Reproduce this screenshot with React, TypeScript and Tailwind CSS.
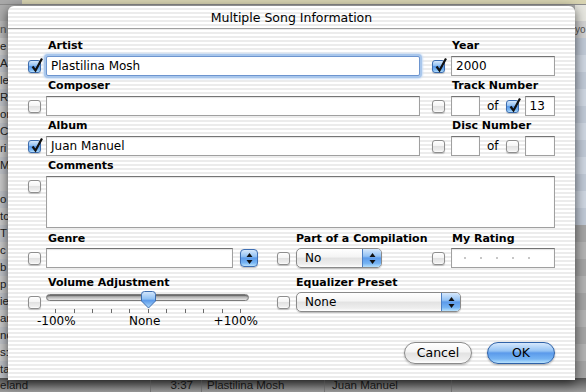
import React from "react";

const stripe =
  "bg-[repeating-linear-gradient(180deg,#ffffff_0px,#ffffff_2px,#ececec_2px,#ececec_4px)]";
const aquaBlue =
  "bg-[linear-gradient(180deg,#d6e8fc_0%,#93c2f4_40%,#5b9aea_50%,#76b4f3_80%,#b9e2fd_100%)]";
const aquaWhite =
  "bg-[linear-gradient(180deg,#ffffff_0%,#f4f4f4_45%,#e2e2e2_50%,#eeeeee_85%,#ffffff_100%)]";

function Check({ on = false }: { on?: boolean }) {
  return (
    <span
      className={`relative block h-[13px] w-[13px] shrink-0 rounded-[3px] border shadow-[0_1px_1px_rgba(0,0,0,0.2)] ${
        on ? `border-[#3c6cae] ${aquaBlue}` : `border-[#8e8e8e] ${aquaWhite}`
      }`}
    >
      {on && (
        <svg className="absolute -top-[4px] left-[1px]" width="14" height="16" viewBox="0 0 14 16">
          <path d="M2.5 9.5 L5.5 13.5 L12 1.5" fill="none" stroke="#111" strokeWidth="2.2" />
        </svg>
      )}
    </span>
  );
}

function Field({ className, focus, children }: { className: string; focus?: boolean; children?: React.ReactNode }) {
  const look = focus
    ? "rounded-[2px] border-[#6d95cf] shadow-[0_0_0_2px_#a9c7ec,0_0_2px_3px_#cbdef5]"
    : "border-[#a0a0a0] border-t-[#747474] shadow-[inset_0_1px_1px_rgba(0,0,0,0.12)]";
  return (
    <div className={`shrink-0 border bg-white pl-[4px] text-[12px] leading-[18px] text-black ${look} ${className}`}>
      {children}
    </div>
  );
}

function Label({ children, pad = "pl-[20px]" }: { children: React.ReactNode; pad?: string }) {
  return <div className={`h-[14px] whitespace-nowrap text-[11px] font-bold leading-[14px] text-black ${pad}`}>{children}</div>;
}

function Arrows() {
  return (
    <svg width="7" height="11" viewBox="0 0 7 11">
      <path d="M3.5 0 L6.5 4 H0.5 Z M0.5 7 H6.5 L3.5 11 Z" fill="#111" />
    </svg>
  );
}

function Popup({ className, value }: { className: string; value: string }) {
  return (
    <div
      className={`flex h-[20px] shrink-0 items-center rounded-[5px] border border-[#8a8a8a] shadow-[0_1px_1px_rgba(0,0,0,0.2)] ${aquaWhite} ${className}`}
    >
      <span className="flex-1 pl-[8px] text-[12px] leading-[18px] text-black">{value}</span>
      <span className={`flex h-full w-[19px] items-center justify-center rounded-r-[4px] border-l border-[#4d7fc2] ${aquaBlue}`}>
        <Arrows />
      </span>
    </div>
  );
}

function Slider() {
  return (
    <div className="relative w-[203px]">
      <div className="mt-[2px] h-[7px] rounded-full border border-[#7a7a7a] bg-[linear-gradient(180deg,#8c8c8c,#bdbdbd_50%,#e8e8e8)] shadow-[inset_0_1px_1px_rgba(0,0,0,0.3)]" />
      <svg className="absolute -top-[1px] left-[94px]" width="17" height="18" viewBox="0 0 17 18">
        <defs>
          <linearGradient id="thumb" x1="0" y1="0" x2="0" y2="1">
            <stop offset="0" stopColor="#d6e8fc" />
            <stop offset="0.45" stopColor="#8fc0f3" />
            <stop offset="0.55" stopColor="#5b9aea" />
            <stop offset="1" stopColor="#b2dcfc" />
          </linearGradient>
        </defs>
        <path d="M1.5 3.5 Q1.5 0.5 4.5 0.5 H12.5 Q15.5 0.5 15.5 3.5 V10 L8.5 17 L1.5 10 Z" fill="url(#thumb)" stroke="#3d6db0" />
      </svg>
      <div className="ml-[9px] mt-[8px] flex w-[186px] justify-between">
        {Array.from({ length: 11 }).map((_, i) => (
          <span key={i} className="h-[4px] w-px bg-[#6a6a6a]" />
        ))}
      </div>
      <div className="-ml-[9px] mt-[1px] flex w-[221px] justify-between text-[12px] leading-[15px] text-black">
        <span>-100%</span>
        <span>None</span>
        <span>+100%</span>
      </div>
    </div>
  );
}

const leftBits = ["e", "A", "le", "Ry", "or", "C", "ri", "Ma", "", "o", "tc", "T", "c", "b", "p", "ie", "an", "nd", "s:", "ta"];

function Backdrop() {
  return (
    <div className="flex h-full flex-col font-['Liberation_Sans',sans-serif] text-[11.5px] text-[#222]">
      <div className="flex h-[5px] border-b border-[#8c8c8c]">
        <div className="w-[22px] bg-[#a9a9a9]" />
        <div className="flex-1 bg-[#d8d4b2]" />
      </div>
      <div className="flex h-[16px] bg-[#adadad]">
        <div className="flex-1" />
        <div className="w-[11px] bg-[#e6e6df]" />
      </div>
      <div className="flex h-[17px] items-center bg-[#b9b9b9] text-[#555]">
        <span className="w-[8px] whitespace-nowrap">n</span>
        <div className="flex-1" />
        <span className="w-[11px] self-stretch overflow-hidden bg-[#d3d3d3] text-[10px] leading-[17px]">yo</span>
      </div>
      {leftBits.map((t, i) => (
        <div key={i} className={`flex h-[17px] items-center ${i % 2 ? "bg-[#bfc2c7]" : "bg-[#cacaca]"}`}>
          <span className="w-[8px] whitespace-nowrap">{t}</span>
          <div className="flex-1" />
          <span
            className={`w-[11px] self-stretch ${
              i < 11 ? (i % 2 ? "bg-[#cfd7e2]" : "bg-[#c1cad7]") : i % 2 ? "bg-[#a6a6a6]" : "bg-[#b4b4b4]"
            }`}
          />
        </div>
      ))}
      <div className="flex flex-1 items-center bg-[linear-gradient(180deg,#555555,#9c9c9c)] leading-[13px] text-[#1a1a1a]">
        <span className="w-[151px] border-r border-[#777]">eland</span>
        <span className="w-[51px] border-r border-[#777] pr-[8px] text-right">3:37</span>
        <span className="w-[123px] border-r border-[#777] pl-[5px]">Plastilina Mosh</span>
        <span className="w-[127px] border-r border-[#777] pl-[7px]">Juan Manuel</span>
        <span className="flex-1" />
      </div>
    </div>
  );
}

export default function App() {
  return (
    <div className="relative h-[392px] w-[586px] overflow-hidden bg-[#9b9b9b] font-['DejaVu_Sans',sans-serif]">
      <Backdrop />

      <div
        className={`absolute left-[8px] top-[6px] flex h-[374px] w-[567px] flex-col rounded-t-[6px] shadow-[0_3px_12px_rgba(0,0,0,0.65)] ${stripe}`}
      >
        <div className="h-[23px] border-b border-[#a0a0a0] text-center text-[12.5px] leading-[23px] text-black">
          Multiple Song Information
        </div>

        <div className="flex flex-col pl-[20px] pt-[10px]">
          {/* artist / year */}
          <div className="flex">
            <div className="flex w-[392px] flex-col">
              <Label>Artist</Label>
              <div className="mt-[3px] flex items-center gap-[5px]">
                <Check on />
                <Field focus className="h-[20px] w-[374px]">Plastilina Mosh</Field>
              </div>
            </div>
            <div className="ml-[12px] flex flex-col">
              <Label>Year</Label>
              <div className="mt-[3px] flex items-center gap-[6px]">
                <Check on />
                <Field className="h-[20px] w-[104px]">2000</Field>
              </div>
            </div>
          </div>

          {/* composer / track */}
          <div className="mt-[3px] flex">
            <div className="flex w-[392px] flex-col">
              <Label>Composer</Label>
              <div className="mt-[3px] flex items-center gap-[5px]">
                <Check />
                <Field className="h-[20px] w-[374px]" />
              </div>
            </div>
            <div className="ml-[12px] flex flex-col">
              <Label>Track Number</Label>
              <div className="mt-[3px] flex items-center">
                <Check />
                <Field className="ml-[6px] h-[20px] w-[29px]" />
                <span className="ml-[7px] text-[12px] text-black">of</span>
                <span className="ml-[7px]">
                  <Check on />
                </span>
                <Field className="ml-[6px] h-[20px] w-[30px]">13</Field>
              </div>
            </div>
          </div>

          {/* album / disc */}
          <div className="mt-[3px] flex">
            <div className="flex w-[392px] flex-col">
              <Label>Album</Label>
              <div className="mt-[3px] flex items-center gap-[5px]">
                <Check on />
                <Field className="h-[20px] w-[374px]">Juan Manuel</Field>
              </div>
            </div>
            <div className="ml-[12px] flex flex-col">
              <Label>Disc Number</Label>
              <div className="mt-[3px] flex items-center">
                <Check />
                <Field className="ml-[6px] h-[20px] w-[29px]" />
                <span className="ml-[7px] text-[12px] text-black">of</span>
                <span className="ml-[7px]">
                  <Check />
                </span>
                <Field className="ml-[6px] h-[20px] w-[30px]" />
              </div>
            </div>
          </div>

          {/* comments */}
          <div className="mt-[3px] flex flex-col">
            <Label>Comments</Label>
            <div className="mt-[3px] flex items-start gap-[5px]">
              <span className="mt-[4px]">
                <Check />
              </span>
              <Field className="h-[52px] w-[509px]" />
            </div>
          </div>

          {/* genre / compilation / rating */}
          <div className="mt-[4px] flex">
            <div className="flex w-[230px] flex-col">
              <Label>Genre</Label>
              <div className="mt-[2px] flex items-center">
                <Check />
                <Field className="ml-[5px] h-[20px] w-[187px]" />
                <span
                  className={`ml-[7px] flex h-[18px] w-[18px] items-center justify-center rounded-[4px] border border-[#3f6fb3] shadow-[0_1px_1px_rgba(0,0,0,0.25)] ${aquaBlue}`}
                >
                  <Arrows />
                </span>
              </div>
            </div>
            <div className="ml-[19px] flex w-[105px] flex-col">
              <Label pad="pl-[19px]">Part of a Compilation</Label>
              <div className="mt-[2px] flex items-center gap-[6px]">
                <Check />
                <Popup className="w-[86px]" value="No" />
              </div>
            </div>
            <div className="ml-[50px] flex flex-col">
              <Label>My Rating</Label>
              <div className="mt-[2px] flex items-center gap-[6px]">
                <Check />
                <Field className="flex h-[20px] w-[104px] items-center gap-[14px] pl-[12px]">
                  {[0, 1, 2, 3, 4].map((i) => (
                    <span key={i} className="h-[2px] w-[2px] rounded-full bg-[#b5b5b5]" />
                  ))}
                </Field>
              </div>
            </div>
          </div>

          {/* volume / equalizer */}
          <div className="mt-[8px] flex">
            <div className="flex w-[221px] flex-col">
              <Label>Volume Adjustment</Label>
              <div className="mt-[2px] flex items-start gap-[5px]">
                <span className="mt-[4px]">
                  <Check />
                </span>
                <Slider />
              </div>
            </div>
            <div className="ml-[28px] flex flex-col">
              <Label pad="pl-[19px]">Equalizer Preset</Label>
              <div className="mt-[2px] flex items-center gap-[6px]">
                <Check />
                <Popup className="w-[165px]" value="None" />
              </div>
            </div>
          </div>
        </div>

        <div className="mt-auto flex justify-end gap-[15px] pb-[16px] pr-[20px]">
          <button
            className={`h-[22px] w-[68px] rounded-full border border-[#8a8a8a] text-[12.5px] leading-[20px] text-black shadow-[0_1px_2px_rgba(0,0,0,0.25)] ${aquaWhite}`}
          >
            Cancel
          </button>
          <button
            className={`h-[22px] w-[68px] rounded-full border border-[#2f62a8] text-[12.5px] leading-[20px] text-black shadow-[0_1px_2px_rgba(0,0,0,0.3)] ${aquaBlue}`}
          >
            OK
          </button>
        </div>
      </div>
    </div>
  );
}
